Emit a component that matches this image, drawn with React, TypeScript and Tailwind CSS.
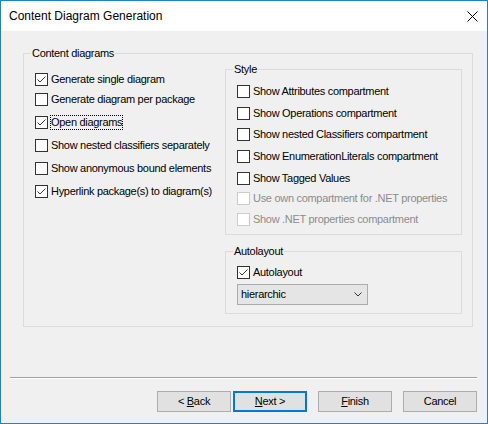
import React from "react";

type Item = { label: string; checked?: boolean; disabled?: boolean; focus?: boolean; mt: string };

const leftItems: Item[] = [
  { label: "Generate single diagram", checked: true, mt: "" },
  { label: "Generate diagram per package", mt: "mt-[7px]" },
  { label: "Open diagrams", checked: true, focus: true, mt: "mt-[10px]" },
  { label: "Show nested classifiers separately", mt: "mt-[10px]" },
  { label: "Show anonymous bound elements", mt: "mt-[10px]" },
  { label: "Hyperlink package(s) to diagram(s)", checked: true, mt: "mt-[10px]" },
];

const styleItems: Item[] = [
  { label: "Show Attributes compartment", mt: "mt-[9px]" },
  { label: "Show Operations compartment", mt: "mt-[9px]" },
  { label: "Show nested Classifiers compartment", mt: "mt-[8px]" },
  { label: "Show EnumerationLiterals compartment", mt: "mt-[9px]" },
  { label: "Show Tagged Values", mt: "mt-[9px]" },
  { label: "Use own compartment for .NET properties", disabled: true, mt: "mt-[7px]" },
  { label: "Show .NET properties compartment", disabled: true, mt: "mt-[8px]" },
];

function CheckBox({ checked, disabled }: { checked?: boolean; disabled?: boolean }) {
  return (
    <div
      className={
        "flex h-[13px] w-[13px] shrink-0 items-center justify-center border bg-white " +
        (disabled ? "border-[#cccccc]" : "border-[#333333]")
      }
    >
      {checked && (
        <svg width="11" height="11" viewBox="0 0 11 11">
          <path d="M1.5 5.5 L4 8 L9.5 2.5" fill="none" stroke="#333333" strokeWidth="1" />
        </svg>
      )}
    </div>
  );
}

function CheckRow({ item }: { item: Item }) {
  return (
    <div className={"flex h-[13px] items-center " + item.mt}>
      <CheckBox checked={item.checked} disabled={item.disabled} />
      <span
        className={
          "ml-[3px] whitespace-nowrap leading-[13px] " +
          (item.disabled ? "text-[#8c8c8c]" : "text-black") +
          (item.focus ? " outline outline-1 outline-dotted outline-black" : "")
        }
      >
        {item.label}
      </span>
    </div>
  );
}

function GroupLabel({ children }: { children: React.ReactNode }) {
  return <div className="-mt-[7px] ml-[7px] w-fit bg-[#f0f0f0] px-[1px] leading-[13px]">{children}</div>;
}

function Button({ children, primary }: { children: React.ReactNode; primary?: boolean }) {
  return (
    <button
      className={
        "flex h-[21px] w-[74px] items-center justify-center bg-[#e1e1e1] text-black " +
        (primary ? "border-2 border-[#0078d7]" : "border border-[#adadad]")
      }
    >
      <span className="whitespace-pre">{children}</span>
    </button>
  );
}

export default function App() {
  return (
    <div
      className="flex h-[424px] w-[488px] flex-col border border-[#1883d7] text-[11px] text-black"
      style={{ fontFamily: '"Liberation Sans", Arial, sans-serif' }}
    >
      {/* title bar */}
      <div className="flex h-[30px] shrink-0 items-center justify-between bg-white pl-[8px] pr-[9px]">
        <span className="text-[12px]">Content Diagram Generation</span>
        <svg width="11" height="11" viewBox="0 0 11 11">
          <path d="M0.5 0.5 L10.5 10.5 M10.5 0.5 L0.5 10.5" stroke="#000" strokeWidth="1" />
        </svg>
      </div>

      <div className="flex flex-1 flex-col bg-[#f0f0f0] tracking-[-0.3px]">
        {/* Content diagrams group */}
        <div className="ml-[22px] mt-[22px] h-[274px] w-[450px] border border-[#dcdcdc]">
          <GroupLabel>Content diagrams</GroupLabel>
          <div className="flex">
            <div className="flex w-[201px] flex-col pl-[11px] pt-[13px]">
              {leftItems.map((it) => (
                <CheckRow key={it.label} item={it} />
              ))}
            </div>

            <div className="flex flex-col">
              {/* Style */}
              <div className="mt-[9px] h-[166px] w-[237px] border border-[#dcdcdc] pl-[11px]">
                <div className="-ml-[11px]">
                  <GroupLabel>Style</GroupLabel>
                </div>
                {styleItems.map((it) => (
                  <CheckRow key={it.label} item={it} />
                ))}
              </div>

              {/* Autolayout */}
              <div className="mt-[16px] h-[63px] w-[237px] border border-[#dcdcdc] pl-[11px]">
                <div className="-ml-[11px]">
                  <GroupLabel>Autolayout</GroupLabel>
                </div>
                <CheckRow item={{ label: "Autolayout", checked: true, mt: "mt-[8px]" }} />
                <div className="mt-[5px] flex h-[21px] w-[131px] items-center justify-between border border-[#acacac] bg-[#e5e5e5] pl-[3px] pr-[5px]">
                  <span>hierarchic</span>
                  <svg width="8" height="5" viewBox="0 0 8 5">
                    <path d="M0.5 0.5 L4 4 L7.5 0.5" fill="none" stroke="#333333" strokeWidth="1" />
                  </svg>
                </div>
              </div>
            </div>
          </div>
        </div>

        {/* separator */}
        <div className="ml-[9px] mt-[50px] w-[467px] border-b border-t border-b-white border-t-[#a0a0a0]" />

        {/* buttons */}
        <div className="mt-[12px] flex justify-end pr-[10px]">
          <Button>
            &lt; <span className="underline">B</span>ack
          </Button>
          <div className="ml-[2px]">
            <Button primary>
              <span className="underline">N</span>ext &gt;
            </Button>
          </div>
          <div className="ml-[11px]">
            <Button>
              <span className="underline">F</span>inish
            </Button>
          </div>
          <div className="ml-[11px]">
            <Button>Cancel</Button>
          </div>
        </div>
      </div>
    </div>
  );
}
